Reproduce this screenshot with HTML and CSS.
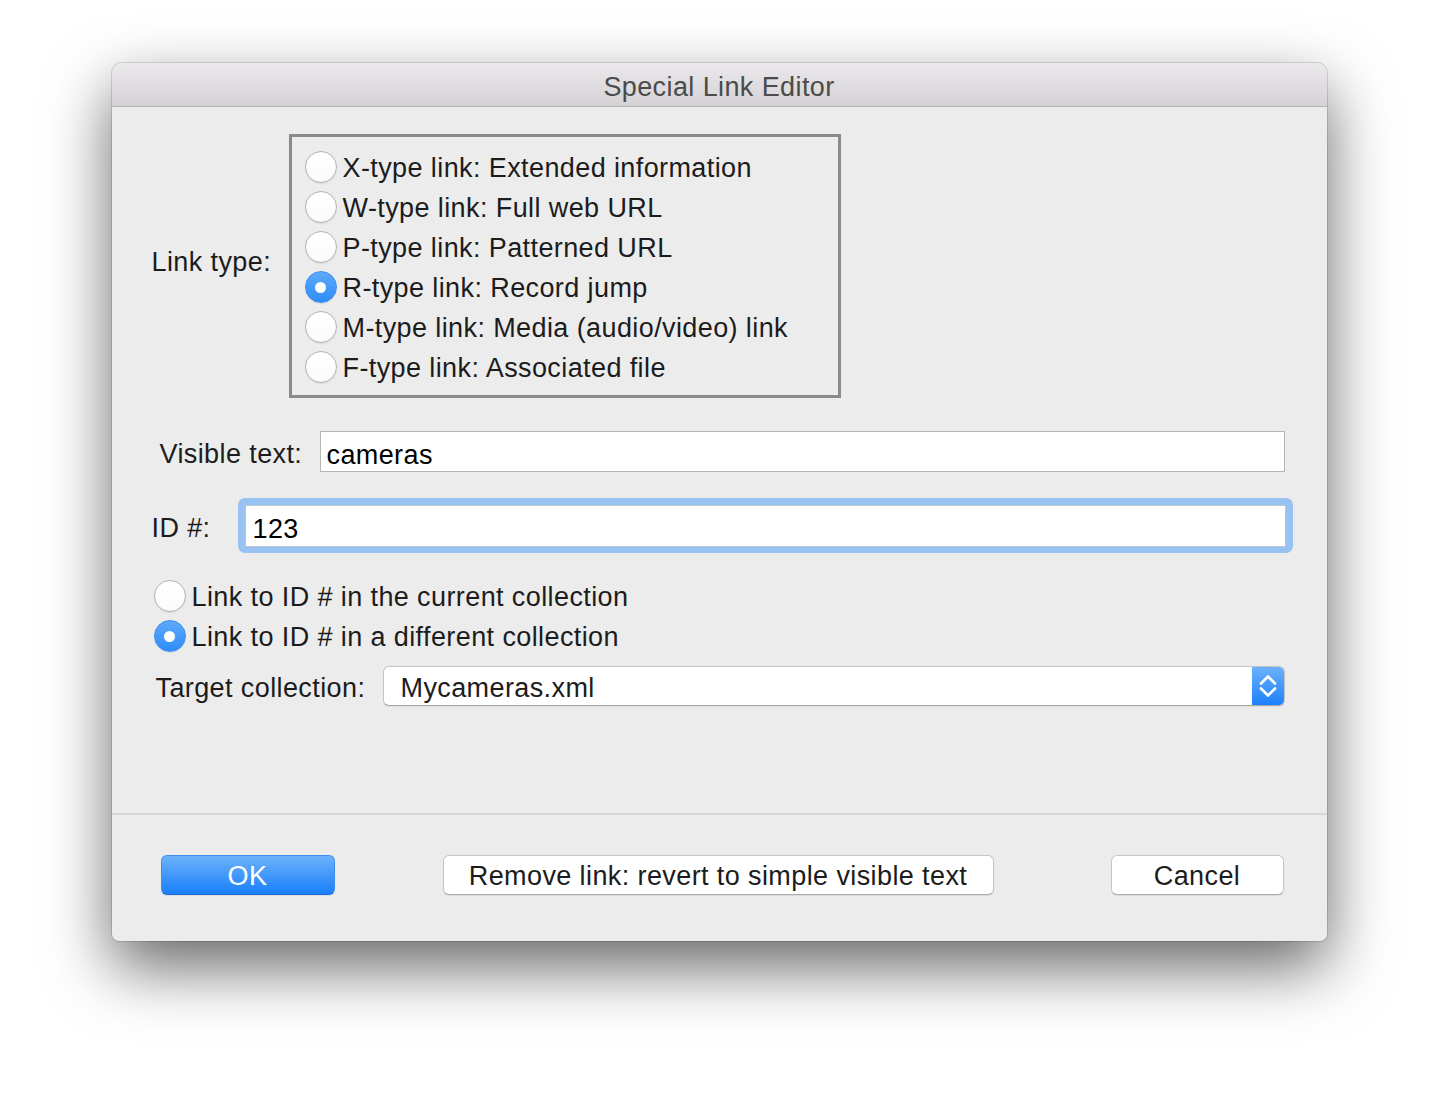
FILE: index.html
```html
<!DOCTYPE html>
<html lang="en">
<head>
<meta charset="utf-8">
<title>Special Link Editor</title>
<link rel="stylesheet" href="styles.css">
</head>
<body>
<div class="stage">
  <div class="window">
    <div class="titlebar">Special Link Editor</div>
    <div class="main">
      <div class="row row-type">
        <div class="label label-type">Link type:</div>
        <div class="groupbox">
          <div class="radio-row"><span class="radio"></span><span class="rtext">X-type link: Extended information</span></div>
          <div class="radio-row"><span class="radio"></span><span class="rtext">W-type link: Full web URL</span></div>
          <div class="radio-row"><span class="radio"></span><span class="rtext">P-type link: Patterned URL</span></div>
          <div class="radio-row"><span class="radio checked"></span><span class="rtext">R-type link: Record jump</span></div>
          <div class="radio-row"><span class="radio"></span><span class="rtext">M-type link: Media (audio/video) link</span></div>
          <div class="radio-row"><span class="radio"></span><span class="rtext">F-type link: Associated file</span></div>
        </div>
      </div>

      <div class="row row-visible">
        <div class="label label-visible">Visible text:</div>
        <div class="textfield">cameras</div>
      </div>

      <div class="row row-id">
        <div class="label label-id">ID #:</div>
        <div class="focusring"><div class="textfield textfield-id">123</div></div>
      </div>

      <div class="radios-bottom">
        <div class="radio-row"><span class="radio"></span><span class="rtext">Link to ID # in the current collection</span></div>
        <div class="radio-row"><span class="radio checked"></span><span class="rtext">Link to ID # in a different collection</span></div>
      </div>

      <div class="row row-target">
        <div class="label label-target">Target collection:</div>
        <div class="popup">
          <div class="popup-value">Mycameras.xml</div>
          <div class="stepper">
            <svg width="32" height="40" viewBox="0 0 32 40" aria-hidden="true">
              <path d="M9 17.5 L16 10.5 L23 17.5" fill="none" stroke="#fff" stroke-width="2.6" stroke-linecap="round" stroke-linejoin="round"/>
              <path d="M9 22.5 L16 29.5 L23 22.5" fill="none" stroke="#fff" stroke-width="2.6" stroke-linecap="round" stroke-linejoin="round"/>
            </svg>
          </div>
        </div>
      </div>
    </div>
    <div class="footer">
      <button class="btn btn-default">OK</button>
      <button class="btn btn-remove">Remove link: revert to simple visible text</button>
      <button class="btn btn-cancel">Cancel</button>
    </div>
  </div>
</div>
</body>
</html>
```

FILE: styles.css
```css
* { box-sizing: border-box; }

html, body {
  margin: 0;
  padding: 0;
  background: #ffffff;
}

body {
  font-family: "Liberation Sans", Arial, Helvetica, sans-serif;
  font-size: 27px;
  letter-spacing: 0.4px;
  color: #1c1c1c;
}

.stage {
  display: flex;
  justify-content: center;
  padding-top: 63px;
  height: 1102px;
}

.window {
  width: 1215px;
  height: 878px;
  background: #ececec;
  border-radius: 10px 10px 7px 7px;
  box-shadow: 0 0 0 1px rgba(0, 0, 0, 0.13), 0 26px 64px rgba(0, 0, 0, 0.6);
  display: flex;
  flex-direction: column;
  overflow: hidden;
}

.titlebar {
  height: 44px;
  flex: none;
  background: linear-gradient(#ebe9eb, #d4d2d4);
  border-bottom: 1px solid #b4b4b4;
  color: #4b4b4b;
  text-align: center;
  line-height: 49px;
}

.main {
  flex: 1;
  padding: 27px 42px 0 40px;
  display: flex;
  flex-direction: column;
}

.row {
  display: flex;
  align-items: center;
}

.label { flex: none; white-space: nowrap; padding-top: 5px; }
.label-type { width: 137px; padding-top: 0; padding-bottom: 8px; }
.label-visible { width: 160px; margin-left: 8px; }
.label-id { width: 86px; }
.label-target { width: 227px; margin-left: 4px; padding-top: 4px; }

.groupbox {
  width: 552px;
  height: 264px;
  border: 3px solid #8a8a8a;
  padding: 10px 0 8px 13px;
}

.radio-row {
  display: flex;
  align-items: center;
  height: 40px;
  white-space: nowrap;
}

.rtext { padding-top: 2px; }

.radio {
  flex: none;
  width: 32px;
  height: 32px;
  border-radius: 50%;
  background: linear-gradient(#ffffff, #fbfbfb);
  border: 1px solid #b3b3b3;
  box-shadow: 0 1px 1px rgba(0, 0, 0, 0.08);
  margin-right: 6px;
  position: relative;
}

.radio.checked {
  background: linear-gradient(#5eaafb, #2f8cf9);
  border-color: #3b8ff0;
}

.radio.checked::after {
  content: "";
  position: absolute;
  left: 50%;
  top: 50%;
  width: 11px;
  height: 11px;
  margin: -5.5px 0 0 -5.5px;
  border-radius: 50%;
  background: #ffffff;
}

.row-visible { margin-top: 33px; }

.textfield {
  flex: 1;
  height: 41px;
  background: #ffffff;
  border: 1px solid #b5b5b5;
  padding-left: 6px;
  line-height: 47px;
  color: #000000;
  white-space: nowrap;
}

.row-id { margin-top: 26px; }

.focusring {
  flex: 1;
  margin-right: -8px;
  background: #98c2f1;
  border-radius: 7px;
  padding: 7px 7px 6px 7px;
}

.textfield-id {
  height: 42px;
  border-color: #bcc4cc;
  padding-left: 7px;
  line-height: 46px;
}

.radios-bottom {
  margin-top: 23px;
  padding-left: 2px;
}

.row-target { margin-top: 10px; }

.popup {
  flex: 1;
  height: 40px;
  display: flex;
  background: #ffffff;
  border-radius: 6px;
  border: 1px solid #c4c4c4;
  border-bottom-color: #a9a9a9;
  box-shadow: 0 1px 1px rgba(0, 0, 0, 0.06);
  overflow: hidden;
}

.popup-value {
  flex: 1;
  padding-left: 17px;
  padding-top: 2px;
  line-height: 38px;
  color: #1c1c1c;
}

.stepper {
  flex: none;
  width: 33px;
  margin: -1px -1px -1px 0;
  background: linear-gradient(#6db3fb, #1b7ffa);
  display: flex;
  align-items: center;
  justify-content: center;
}

.stepper svg { display: block; }

.footer {
  flex: none;
  height: 128px;
  border-top: 2px solid #d7d7d7;
  display: flex;
  align-items: flex-start;
  padding: 40px 43px 0 49px;
}

.btn {
  font-family: inherit;
  font-size: 27px;
  letter-spacing: 0.4px;
  height: 40px;
  border-radius: 6px;
  background: #ffffff;
  border: 1px solid #c6c6c6;
  border-bottom-color: #acacac;
  box-shadow: 0 1px 1px rgba(0, 0, 0, 0.08);
  color: #1c1c1c;
  padding: 2px 0 0 0;
  line-height: 36px;
  cursor: default;
}

.btn-default {
  width: 174px;
  background: linear-gradient(#6cb2fa, #1a7ffb);
  border: 1px solid #3c8ef0;
  border-bottom-color: #1d6ee0;
  color: #ffffff;
}

.btn-remove {
  width: 551px;
  margin-left: 108px;
}

.btn-cancel {
  width: 173px;
  margin-left: auto;
}
```
